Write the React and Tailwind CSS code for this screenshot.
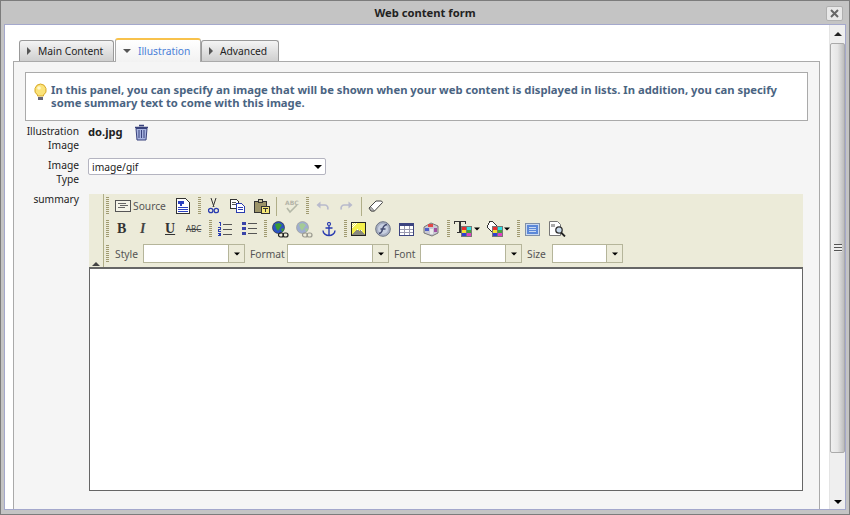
import React from 'react';

const FONT = 'font-["Noto_Sans",sans-serif]';

const Px = ({ w, h, className = '', children }) => (
  <svg width={w} height={h} viewBox={`0 0 ${w} ${h}`} className={`block ${className}`} shapeRendering="crispEdges">
    {children}
  </svg>
);

const Grip = ({ h = 18, className = '' }) => (
  <div className={`w-[3px] shrink-0 bg-[repeating-linear-gradient(to_bottom,#a09a70_0,#a09a70_1px,transparent_1px,transparent_2px)] ${className}`} style={{ height: h }} />
);

const Sep = ({ className = '' }) => <div className={`w-px h-[19px] bg-[#b0ae88] shrink-0 ${className}`} />;

const SourceIcon = () => (
  <Px w={16} h={12}>
    <rect x="0.5" y="0.5" width="15" height="11" fill="#f4f3e8" stroke="#555" />
    <path d="M3 3h8v1H3zM5 5h8v1H5zM3 7h7v1H3z" fill="#666" />
  </Px>
);

const DocIcon = () => (
  <Px w={14} h={16}>
    <path d="M.5.5h9l4 4v11H.5z" fill="#fff" stroke="#333" />
    <path d="M2 3h6v3H2z" fill="#2a40c0" />
    <path d="M4 6h2v2H4zM2 9h10v1H2zM2 11h10v1H2zM2 13h10v1H2z" fill="#2a40c0" />
  </Px>
);

const CutIcon = () => (
  <svg width="11" height="16" viewBox="0 0 11 16" className="block">
    <path d="M3 0l3 9M8 0L5 9" stroke="#333" strokeWidth="1" fill="none" />
    <circle cx="2.7" cy="12.5" r="2.2" fill="none" stroke="#2a3cb0" strokeWidth="1.3" />
    <circle cx="8.3" cy="12.5" r="2.2" fill="none" stroke="#2a3cb0" strokeWidth="1.3" />
  </svg>
);

const CopyIcon = () => (
  <Px w={15} h={14}>
    <path d="M.5.5h6l2 2v7H.5z" fill="#fff" stroke="#333" />
    <path d="M6.5 4.5h5l3 3v6h-8z" fill="#fff" stroke="#2a3cb0" />
    <path d="M2 3h4v1H2zM2 5h4v1H2z" fill="#555" />
    <path d="M8 8h5v1H8zM8 10h5v1H8z" fill="#2a3cb0" />
  </Px>
);

const PasteIcon = () => (
  <Px w={16} h={15}>
    <path d="M.5 2.5h12v11H.5z" fill="#9c9468" stroke="#333" />
    <path d="M4.5.5h4v3h-4z" fill="#c8c4a0" stroke="#333" />
    <path d="M7.5 7.5h8v7h-8z" fill="#f6e878" stroke="#333" />
    <path d="M9 9h5v1H9zM11 10h1v3h-1z" fill="#333" />
  </Px>
);

const SpellIcon = () => (
  <svg width="15" height="15" viewBox="0 0 15 15" className="block">
    <text x="1" y="6" fontSize="6" fill="#b4b4a8" fontFamily="DejaVu Sans, sans-serif" fontWeight="700">ABC</text>
    <path d="M3 9l3 4 7-7" fill="none" stroke="#b4b8a8" strokeWidth="1.6" />
  </svg>
);

const UndoIcon = ({ flip }) => (
  <svg width="13" height="10" viewBox="0 0 13 10" className={`block ${flip ? '-scale-x-100' : ''}`}>
    <path d="M3 4h6a3 3 0 0 1 2.500 4.500" fill="none" stroke="#b8bacc" strokeWidth="1.600" />
    <path d="M0.500 4L4.500 0.500v7z" fill="#b8bacc" />
  </svg>
);

const EraserIcon = () => (
  <svg width="15" height="12" viewBox="0 0 15 12" className="block">
    <path d="M1 8l7-7h5.500l1 1.500-8 8.500H3z" fill="#fff" stroke="#444" />
    <path d="M1 8l2.500 3h3l-3-3.500z" fill="#bbb" stroke="#444" strokeWidth="0.6" />
  </svg>
);

const OlIcon = () => (
  <Px w={15} h={14}>
    <path d="M1 0h2v4H2V1H1zM0 5h3v3H1v1h2v1H0V7h2V6H0zM0 11h3v3H0v-1h2v-.5H1v-1h1V12H0z" fill="#2a3cb0" />
    <path d="M5 2h9v1H5zM5 7h9v1H5zM5 12h9v1H5z" fill="#555" />
  </Px>
);

const UlIcon = () => (
  <Px w={15} h={14}>
    <path d="M0 0h4v3H0zM0 5h4v3H0zM0 10h4v3H0z" fill="#3a44a8" />
    <path d="M6 1h9v1H6zM6 6h9v1H6zM6 11h9v1H6z" fill="#555" />
  </Px>
);

const LinkIcon = ({ off }) => (
  <svg width="17" height="17" viewBox="0 0 17 17" className={`block ${off ? 'opacity-40' : ''}`}>
    <circle cx="6.500" cy="6.500" r="6" fill="#2c52c4" stroke="#222" strokeWidth="0.600" />
    <path d="M3 3l4-1 3 2-2 3-2 3-2-3zM9 8l2-1 1 2-2 2z" fill="#3a9a34" />
    <rect x="6.500" y="12" width="5" height="4" rx="2" fill="none" stroke="#222" strokeWidth="1.200" />
    <rect x="11" y="12" width="5" height="4" rx="2" fill="none" stroke="#222" strokeWidth="1.200" />
  </svg>
);

const AnchorIcon = () => (
  <svg width="14" height="15" viewBox="0 0 14 15" className="block">
    <circle cx="7" cy="2" r="1.500" fill="none" stroke="#2a3cb0" strokeWidth="1.200" />
    <path d="M7 3.500V14M3.500 6h7M1 8.500c0 3 3 5 6 5s6-2 6-5" fill="none" stroke="#2a3cb0" strokeWidth="1.400" />
  </svg>
);

const ImageIcon = () => (
  <Px w={15} h={14}>
    <rect x="0.500" y="0.500" width="14" height="13" fill="#f4f04c" stroke="#222" />
    <path d="M1 1h1v1H1zM3 1h1v1H3zM5 1h1v1H5zM2 2h1v1H2zM4 2h1v1H4zM1 3h1v1H1zM3 3h1v1H3zM2 4h1v1H2zM1 5h1v1H1z" fill="#fff" />
    <path d="M1 13l5-6 2 2 2-1 4 5z" fill="#8a8a7c" />
    <path d="M6 7h1v1H6zM10 8h1v1h-1z" fill="#fff" />
  </Px>
);

const FlashIcon = () => (
  <svg width="16" height="16" viewBox="0 0 16 16" className="block">
    <circle cx="8" cy="8" r="7.300" fill="#a8b0c4" stroke="#6c7484" />
    <circle cx="8" cy="8" r="5" fill="#c8d0e0" />
    <path d="M12 3.500C8.500 4 8 6 7.500 8.500S6 12 4 12.500M5.500 8h5" fill="none" stroke="#444c70" strokeWidth="1.300" />
  </svg>
);

const TableIcon = () => (
  <Px w={15} h={13}>
    <rect x="0" y="0" width="15" height="13" fill="#3c4480" />
    <rect x="1" y="3" width="13" height="9" fill="#fff" />
    <path d="M5 3h1v9H5zM10 3h1v9h-1zM1 6h13v1H1zM1 9h13v1H1z" fill="#9a9ab0" />
  </Px>
);

const SpecialIcon = () => (
  <svg width="16" height="15" viewBox="0 0 16 15" className="block">
    <path d="M1 5l7-4 7 3v7l-6 3-8-3z" fill="#c8c8d4" stroke="#777" />
    <path d="M5 2h5v3H5z" fill="#e04848" />
    <path d="M2 6h4v3H2z" fill="#5060c8" />
    <path d="M11 6h3v4h-3z" fill="#a050a0" />
    <path d="M7 7h3v5H7z" fill="#eaeaea" />
  </svg>
);

const Swatch = ({ x = 0, y = 0 }) => (
  <g transform={`translate(${x} ${y})`}>
    <rect x="0" y="0" width="11" height="11" fill="#777" />
    <rect x="1" y="1" width="4" height="3" fill="#e83030" />
    <rect x="6" y="1" width="4" height="3" fill="#30e0e0" />
    <rect x="1" y="4" width="4" height="3" fill="#f0e030" />
    <rect x="6" y="4" width="4" height="3" fill="#40a040" />
    <rect x="1" y="7" width="4" height="3" fill="#3040d0" />
    <rect x="6" y="7" width="4" height="3" fill="#e040c0" />
  </g>
);

const TextColorIcon = () => (
  <Px w={18} h={16}>
    <path d="M0 0h12v3h-1V1H7v10h2v1H3v-1h2V1H1v2H0z" fill="#333" />
    <Swatch x={7} y={5} />
  </Px>
);

const BgColorIcon = () => (
  <Px w={17} h={16}>
    <path d="M4 0h2l5 5-5 6-5-5z" fill="#fff" stroke="#333" />
    <Swatch x={6} y={5} />
  </Px>
);

const MaxIcon = () => (
  <Px w={15} h={13}>
    <rect x="0.500" y="0.500" width="14" height="12" fill="#c8d8f0" stroke="#8090a8" />
    <rect x="2" y="2" width="11" height="9" fill="#5c88d8" />
    <path d="M4 4h7v1H4zM4 6h7v1H4zM4 8h7v1H4z" fill="#c8d8f0" />
  </Px>
);

const PreviewIcon = () => (
  <svg width="17" height="16" viewBox="0 0 17 16" className="block">
    <path d="M.5.5h8l3 3v11H.500z" fill="#fff" stroke="#777" />
    <path d="M2 3h4v3H2z" fill="#aaa" />
    <circle cx="10" cy="9" r="3.200" fill="#cde" stroke="#333" strokeWidth="1.300" />
    <path d="M12 11.500l4 4" stroke="#222" strokeWidth="1.800" />
  </svg>
);

const TrashIcon = () => (
  <svg width="15" height="17" viewBox="0 0 15 17" className="block mt-px">
    <path d="M5 1.500h5M1 3.500h13" stroke="#39427c" strokeWidth="1.400" fill="none" />
    <path d="M2 4.500h11l-1 11.500H3z" fill="#a8b4e0" stroke="#39427c" />
    <path d="M5 6v8M7.500 6v8M10 6v8" stroke="#39427c" />
  </svg>
);

const BulbIcon = () => (
  <svg width="15" height="18" viewBox="0 0 15 18" className="block">
    <path d="M7.500 1a6 6 0 0 1 3 11v1h-6v-1a6 6 0 0 1 3-11z" fill="#fbe37a" stroke="#d8a828" />
    <path d="M5 14h5v3H5z" fill="#667" />
    <circle cx="6" cy="5" r="1.800" fill="#fff8d0" />
  </svg>
);

const Caret = ({ className = '' }) => (
  <div className={`w-0 h-0 border-x-[4px] border-x-transparent border-t-[4px] border-t-black ${className}`} />
);

const SideCaret = () => <div className="w-0 h-0 border-y-[4px] border-y-transparent border-l-[4px] border-l-[#555]" />;

const Combo = ({ className }) => (
  <div className={`flex h-[19px] bg-white border border-[#b5b59a] shrink-0 ${className}`}>
    <div className="flex-1" />
    <div className="w-[16px] bg-[#ecebd9] border-l border-[#b5b59a] flex items-center justify-center">
      <Caret className="scale-75" />
    </div>
  </div>
);

function Tab({ label, active, className = '' }) {
  if (active) {
    return (
      <div className={`h-[24px] -mb-px z-10 flex items-center pl-[7px] gap-[7px] rounded-t-[3px] border border-b-0 border-[#aaa] border-t-2 border-t-[#f8c24c] bg-gradient-to-b from-white to-[#f2f2f2] ${className}`}>
        <div className="w-0 h-0 border-x-[4px] border-x-transparent border-t-[4px] border-t-[#555]" />
        <span className="text-[#4a80d8]">{label}</span>
      </div>
    );
  }
  return (
    <div className={`h-[21px] flex items-center pl-[7px] gap-[7px] rounded-t-[3px] border border-b-0 border-[#999] bg-gradient-to-b from-[#f4f4f4] to-[#cfcfcf] ${className}`}>
      <SideCaret />
      <span className="text-[#222]">{label}</span>
    </div>
  );
}

export default function App() {
  return (
    <div className={`w-[850px] h-[515px] overflow-hidden flex flex-col bg-[#c4c4c4] border border-[#7c7c7c] text-[10.25px] leading-[14px] text-[#222] ${FONT}`}>
      <div className="h-[23px] shrink-0 relative flex items-center justify-center font-bold text-[11.2px] text-[#222]">
        Web content form
        <div className="absolute right-[6px] top-[5px] w-[17px] h-[15px] bg-[#e8e8e8] border border-[#b0b0b0] rounded-[2px] flex items-center justify-center">
          <svg width="9" height="9" viewBox="0 0 9 9"><path d="M1 1l7 7M8 1L1 8" stroke="#666" strokeWidth="2" /></svg>
        </div>
      </div>

      <div className="flex-1 min-h-0 mx-[3px] mb-[4px] border border-[#a4a8cc] bg-white flex">
        <div className="flex-1 min-w-0 pl-[8px] pr-[9px] pt-[13px] flex flex-col">
          <div className="flex items-end pl-[6px] h-[23px] shrink-0">
            <Tab label="Main Content" className="w-[95px]" />
            <Tab label="Illustration" active className="w-[86px] ml-[1px]" />
            <Tab label="Advanced" className="w-[78px]" />
          </div>

          <div className="flex-1 min-h-0 bg-[#f5f5f5] border border-b-0 border-[#aaa] pl-[11px] pr-[11px] pt-[10px]">
            <div className="h-[49px] bg-white border border-[#aaa] flex items-start pl-[7px] pt-[10px]">
              <BulbIcon />
              <p className="ml-[3px] font-bold text-[#4a6482] text-[11.25px] leading-[13px] w-[740px]">
                In this panel, you can specify an image that will be shown when your web content is displayed in lists. In addition, you can specify some summary text to come with this image.
              </p>
            </div>

            <div className="-ml-[11px] mt-[2px] grid grid-cols-[65px_1fr] gap-x-[9px]">
              <div className="text-right pt-[1px]">Illustration<br />Image</div>
              <div className="flex items-start">
                <span className="font-bold text-[11.2px] pt-[2px] w-[46px]">do.jpg</span>
                <TrashIcon />
              </div>

              <div className="text-right mt-[6px]">Image<br />Type</div>
              <div className="mt-[6px] w-[238px] h-[17px] bg-white border border-[#b4b4c0] rounded-[2px] flex items-center pl-[3px] pr-[3px] justify-between">
                <span>image/gif</span>
                <Caret />
              </div>

              <div className="text-right mt-[6px]">summary</div>
              <div className="mt-[8px] ml-px w-[714px] h-[297px] flex flex-col">
                <div className="h-[73px] flex bg-[#ecebd9]">
                  <div className="w-[15px] border-r border-[#b0ae88] flex items-end justify-center pb-px">
                    <div className="w-0 h-0 border-x-[4px] border-x-transparent border-b-[4px] border-b-[#444]" />
                  </div>

                  <div className="flex-1 pl-[2px] pt-[3px]">
                    <div className="flex items-center h-[18px] text-[#555]">
                      <Grip />
                      <div className="ml-[6px]"><SourceIcon /></div>
                      <span className="ml-[2px] w-[35px]">Source</span>
                      <div className="ml-[8px]"><DocIcon /></div>
                      <Grip className="ml-[8px]" />
                      <div className="ml-[7px]"><CutIcon /></div>
                      <div className="ml-[11px]"><CopyIcon /></div>
                      <div className="ml-[9px]"><PasteIcon /></div>
                      <Sep className="ml-[6px]" />
                      <div className="ml-[7px]"><SpellIcon /></div>
                      <Grip className="ml-[7px]" />
                      <div className="ml-[7px]"><UndoIcon /></div>
                      <div className="ml-[11px]"><UndoIcon flip /></div>
                      <Sep className="ml-[8px]" />
                      <div className="ml-[6px]"><EraserIcon /></div>
                    </div>

                    <div className="flex items-center h-[18px] mt-[5px]">
                      <Grip />
                      <span className="ml-[8px] w-[10px] font-[Liberation_Serif,serif] font-bold text-[14px] text-[#333]">B</span>
                      <span className="ml-[13px] w-[10px] font-[Liberation_Serif,serif] font-bold italic text-[14px] text-[#444]">I</span>
                      <span className="ml-[15px] w-[10px] font-[Liberation_Serif,serif] font-bold underline text-[14px] text-[#333]">U</span>
                      <span className="ml-[11px] w-[17px] line-through text-[8px] text-[#444]">ABC</span>
                      <Grip className="ml-[6px]" />
                      <div className="ml-[6px]"><OlIcon /></div>
                      <div className="ml-[9px]"><UlIcon /></div>
                      <Grip className="ml-[7px]" />
                      <div className="ml-[5px]"><LinkIcon /></div>
                      <div className="ml-[7px]"><LinkIcon off /></div>
                      <div className="ml-[9px]"><AnchorIcon /></div>
                      <Grip className="ml-[8px]" />
                      <div className="ml-[4px]"><ImageIcon /></div>
                      <div className="ml-[9px]"><FlashIcon /></div>
                      <div className="ml-[8px]"><TableIcon /></div>
                      <div className="ml-[9px]"><SpecialIcon /></div>
                      <Grip className="ml-[8px]" />
                      <div className="ml-[4px]"><TextColorIcon /></div>
                      <Caret className="ml-[1px] scale-75" />
                      <div className="ml-[5px]"><BgColorIcon /></div>
                      <Caret className="scale-75" />
                      <Grip className="ml-[6px]" />
                      <div className="ml-[5px]"><MaxIcon /></div>
                      <div className="ml-[9px]"><PreviewIcon /></div>
                    </div>

                    <div className="flex items-center h-[19px] mt-[6px] text-[#555]">
                      <Grip h={17} />
                      <span className="ml-[6px] w-[28px]">Style</span>
                      <Combo className="w-[102px]" />
                      <span className="ml-[5px] w-[37px]">Format</span>
                      <Combo className="w-[102px]" />
                      <span className="ml-[5px] w-[26px]">Font</span>
                      <Combo className="w-[102px]" />
                      <span className="ml-[5px] w-[25px]">Size</span>
                      <Combo className="w-[71px]" />
                    </div>
                  </div>
                </div>
                <div className="flex-1 bg-white border border-[#666] border-t-2" />
              </div>
            </div>
          </div>
        </div>

        <div className="w-[16px] shrink-0 bg-[#efefef] flex flex-col border-l border-[#e4e4e4]">
          <div className="h-[18px] flex items-center justify-center">
            <div className="w-0 h-0 border-x-[4px] border-x-transparent border-b-[4px] border-b-[#222]" />
          </div>
          <div className="flex-1 rounded-[2px] border border-[#aaa] bg-gradient-to-r from-[#f0f0f0] via-[#e6e6e6] to-[#bdbdbd] flex items-center justify-center">
            <div className="w-[8px] h-[8px] bg-[repeating-linear-gradient(to_bottom,#555_0,#555_1px,#eee_1px,#eee_3px)]" />
          </div>
          <div className="h-[56px] flex items-end justify-center pb-[5px]">
            <Caret />
          </div>
        </div>
      </div>
    </div>
  );
}
